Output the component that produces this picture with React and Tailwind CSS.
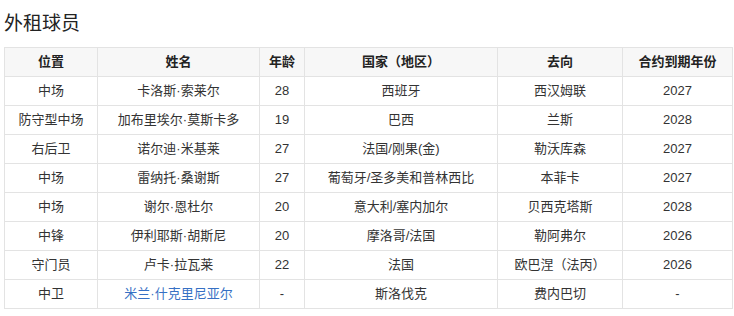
const rows = [
  ["中场", "卡洛斯·索莱尔", "28", "西班牙", "西汉姆联", "2027"],
  ["防守型中场", "加布里埃尔·莫斯卡多", "19", "巴西", "兰斯", "2028"],
  ["右后卫", "诺尔迪·米基莱", "27", "法国/刚果(金)", "勒沃库森", "2027"],
  ["中场", "雷纳托·桑谢斯", "27", "葡萄牙/圣多美和普林西比", "本菲卡", "2027"],
  ["中场", "谢尔·恩杜尔", "20", "意大利/塞内加尔", "贝西克塔斯", "2028"],
  ["中锋", "伊利耶斯·胡斯尼", "20", "摩洛哥/法国", "勒阿弗尔", "2026"],
  ["守门员", "卢卡·拉瓦莱", "22", "法国", "欧巴涅（法丙）", "2026"],
  ["中卫", "米兰·什克里尼亚尔", "-", "斯洛伐克", "费内巴切", "-", true],
];

const headers = ["位置", "姓名", "年龄", "国家（地区）", "去向", "合约到期年份"];
const widths = ["w-[93px]", "w-[162px]", "w-[45px]", "w-[193px]", "w-[125px]", "w-[110px]"];

export default function App() {
  return (
    <div className="min-h-screen bg-white px-[4px] pt-[11px] text-[#333] font-['Liberation_Sans','Noto_Sans_CJK_SC',sans-serif]">
      <h2 className="text-[19px] leading-[26px] text-[#222] mb-[10px]">外租球员</h2>
      <table className="w-[728px] table-fixed border-collapse text-[13px]">
        <colgroup>
          {widths.map((w, i) => (
            <col key={i} className={w} />
          ))}
        </colgroup>
        <thead>
          <tr className="bg-[#f7f7f7]">
            {headers.map((h) => (
              <th key={h} className="h-[29px] border border-[#e3e3e3] p-0 text-center font-bold text-[#222]">
                {h}
              </th>
            ))}
          </tr>
        </thead>
        <tbody>
          {rows.map((r, i) => (
            <tr key={i}>
              {r.slice(0, 6).map((c, j) => (
                <td
                  key={j}
                  className={`h-[29px] border border-[#e3e3e3] p-0 text-center ${
                    j === 1 && r[6] ? "text-[#3670c4]" : ""
                  }`}
                >
                  {c}
                </td>
              ))}
            </tr>
          ))}
        </tbody>
      </table>
    </div>
  );
}
